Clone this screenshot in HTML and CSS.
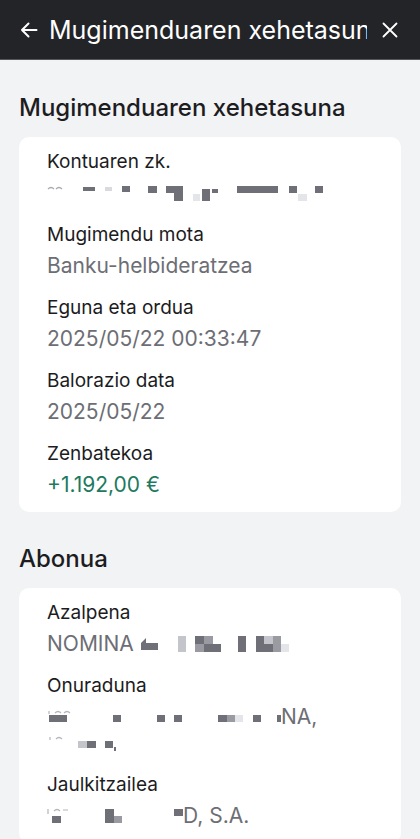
FILE: index.html
```html
<!DOCTYPE html>
<html lang="eu">
<head>
    <meta charset="UTF-8">
    <title>Mugimenduaren xehetasuna</title>
    <link rel="stylesheet" href="styles.css">
</head>
<body>
    <header class="topbar">
        <svg class="icon-back" viewBox="0 0 18 18" width="18" height="18">
            <path d="M16.5 9H2M8.5 2.5L2 9l6.5 6.5" fill="none" stroke="#fff" stroke-width="2" stroke-linecap="round" stroke-linejoin="round"/>
        </svg>
        <div class="topbar-title">Mugimenduaren xehetasuna</div>
        <svg class="icon-close" viewBox="0 0 16 16" width="16" height="16">
            <path d="M1.5 1.5l13 13M14.5 1.5l-13 13" fill="none" stroke="#fff" stroke-width="1.8" stroke-linecap="round"/>
        </svg>
    </header>

    <main class="content">
        <h2 class="section-title">Mugimenduaren xehetasuna</h2>
        <div class="card">
            <div class="field">
                <div class="label">Kontuaren zk.</div>
                <div class="value">
                    <!-- zenbakia ezkutatuta -->
                    <svg class="redacted" width="280" height="20" viewBox="0 3 280 20">
                        <path d="M1 9q3-3 6 0M9 9q3-3 6 0" fill="none" stroke="#a8a9ae" stroke-width="1.2"/>
                        <rect x="36" y="7" width="12" height="4" fill="#6e6f77"/>
                        <rect x="58" y="7" width="7" height="4" fill="#d9dade"/>
                        <rect x="75" y="6" width="8" height="6" fill="#6e6f77"/>
                        <rect x="101" y="6" width="9" height="7" fill="#6e6f77"/>
                        <rect x="119" y="6" width="17" height="7" fill="#6e6f77"/>
                        <rect x="127" y="13" width="9" height="8" fill="#6e6f77"/>
                        <rect x="146" y="14" width="7" height="7" fill="#e4e5e8"/>
                        <rect x="155" y="9" width="8" height="12" fill="#6e6f77"/>
                        <rect x="165" y="9" width="6" height="4" fill="#6e6f77"/>
                        <rect x="190" y="6" width="41" height="7" fill="#6e6f77"/>
                        <rect x="242" y="6" width="8" height="7" fill="#6e6f77"/>
                        <rect x="251" y="14" width="9" height="7" fill="#e4e5e8"/>
                        <rect x="268" y="6" width="8" height="7" fill="#6e6f77"/>
                    </svg>
                </div>
            </div>
            <div class="field">
                <div class="label">Mugimendu mota</div>
                <div class="value">Banku-helbideratzea</div>
            </div>
            <div class="field">
                <div class="label">Eguna eta ordua</div>
                <div class="value">2025/05/22 00:33:47</div>
            </div>
            <div class="field">
                <div class="label">Balorazio data</div>
                <div class="value">2025/05/22</div>
            </div>
            <div class="field">
                <div class="label">Zenbatekoa</div>
                <div class="value positive">+1.192,00 €</div>
            </div>
        </div>

        <h2 class="section-title">Abonua</h2>
        <div class="card">
            <div class="field">
                <div class="label">Azalpena</div>
                <div class="value">NOMINA
                    <svg class="redacted" width="160" height="20" viewBox="0 0 160 20">
                        <path d="M1 16V9l5-5v5h12v7z" fill="#6e6f77"/>
                        <rect x="38" y="2" width="8" height="16" fill="#c4c5ca"/>
                        <rect x="55" y="2" width="9" height="8" fill="#6e6f77"/>
                        <rect x="64" y="2" width="9" height="8" fill="#9a9ba2"/>
                        <rect x="55" y="10" width="9" height="8" fill="#9a9ba2"/>
                        <rect x="64" y="10" width="17" height="8" fill="#6e6f77"/>
                        <rect x="98" y="2" width="8" height="16" fill="#6e6f77"/>
                        <rect x="116" y="2" width="17" height="16" fill="#6e6f77"/>
                        <rect x="124" y="2" width="9" height="8" fill="#c4c5ca"/>
                        <rect x="133" y="2" width="8" height="16" fill="#9a9ba2"/>
                        <rect x="141" y="10" width="8" height="8" fill="#e4e5e8"/>
                    </svg>
                </div>
            </div>
            <div class="field">
                <div class="label">Onuraduna</div>
                <div class="value">
                    <svg class="redacted" width="234" height="20" viewBox="0 0 234 20">
                        <path d="M2 7v-3M8 6q3-3 6 0M17 6q3-3 6 0" fill="none" stroke="#b4b5ba" stroke-width="1.2"/>
                        <rect x="2" y="8" width="18" height="7" fill="#6e6f77"/>
                        <rect x="66" y="8" width="8" height="7" fill="#6e6f77"/>
                        <rect x="110" y="8" width="8" height="7" fill="#6e6f77"/>
                        <rect x="127" y="8" width="8" height="7" fill="#6e6f77"/>
                        <rect x="171" y="8" width="9" height="7" fill="#6e6f77"/>
                        <rect x="180" y="8" width="8" height="7" fill="#9a9ba2"/>
                        <rect x="188" y="8" width="8" height="7" fill="#e4e5e8"/>
                        <rect x="206" y="8" width="8" height="7" fill="#6e6f77"/>
                        <rect x="230" y="8" width="4" height="7" fill="#6e6f77"/>
                    </svg>NA,<br>
                    <svg class="redacted" width="70" height="20" viewBox="0 0 70 20">
                        <path d="M3 4v3M9 6q3-3 6 0" fill="none" stroke="#b4b5ba" stroke-width="1.2"/>
                        <rect x="31" y="8" width="9" height="7" fill="#c4c5ca"/>
                        <rect x="40" y="8" width="9" height="7" fill="#6e6f77"/>
                        <rect x="58" y="8" width="8" height="7" fill="#6e6f77"/>
                        <rect x="67" y="14" width="2" height="4" fill="#6e6f77"/>
                    </svg>
                </div>
            </div>
            <div class="field">
                <div class="label">Jaulkitzailea</div>
                <div class="value">
                    <svg class="redacted" width="136" height="20" viewBox="0 0 136 20">
                        <path d="M1 3v5M7 5q3-3 6 0M16 4h5" fill="none" stroke="#b4b5ba" stroke-width="1.2"/>
                        <rect x="5" y="10" width="9" height="7" fill="#6e6f77"/>
                        <rect x="58" y="3" width="9" height="14" fill="#6e6f77"/>
                        <rect x="67" y="10" width="8" height="7" fill="#9a9ba2"/>
                        <rect x="127" y="3" width="9" height="7" fill="#6e6f77"/>
                    </svg>D, S.A.
                </div>
            </div>
        </div>
    </main>
</body>
</html>
```

FILE: styles.css
```css
body {
    margin: 0;
    background: #f2f3f5;
    font-family: 'Inter', 'Noto Sans', sans-serif;
    color: #1c1c1e;
}
.topbar {
    height: 60px;
    display: flex;
    align-items: center;
    gap: 11px;
    padding: 0 22px 0 20px;
    background: #232427;
    border-bottom: 1px solid #55565b;
    box-sizing: border-box;
}
.icon-back,
.icon-close {
    flex-shrink: 0;
}
.topbar-title {
    flex: 1;
    min-width: 0;
    overflow: hidden;
    white-space: nowrap;
    color: #ffffff;
    font-size: 25px;
    margin-right: 4px;
}
.content {
    padding: 34px 19px 0;
}
.section-title {
    margin: 0 0 15px;
    font-size: 24px;
    line-height: 28px;
    font-weight: 500;
    color: #1d1d1f;
}
.card {
    background: #ffffff;
    border-radius: 10px;
    padding: 13px 28px 14px;
    margin-bottom: 33px;
}
.field + .field {
    margin-top: 17px;
}
.label {
    font-size: 19px;
    line-height: 24px;
}
.value {
    margin-top: 6px;
    font-size: 21px;
    line-height: 26px;
    color: #6d6e75;
}
.value.positive {
    color: #1d7a5f;
}
.redacted {
    vertical-align: -3px;
}
```
